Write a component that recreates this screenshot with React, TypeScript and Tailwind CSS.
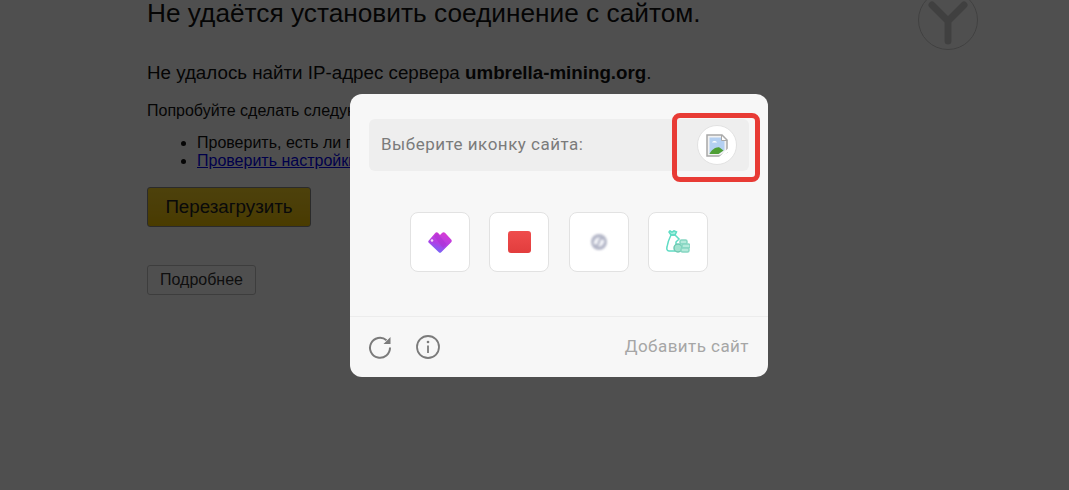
import React from 'react';

function BrokenImage() {
  return (
    <svg width="22" height="23" viewBox="0 0 22 23" className="blur-[0.25px]">
      <path d="M1 1h15l5 5v12l-7 4H1z" fill="#f2f2f2" stroke="#a8a8a8" strokeWidth="1.500" />
      <path d="M3.500 3.500H15l3.500 3.500v9l-6 4H3.500z" fill="#b4d0f2" />
      <path d="M15.500 1v5.500H21z" fill="#fff" stroke="#a8a8a8" />
      <path d="M6 8.500c1-2 4-2 5 0z" fill="#fff" />
      <path d="M3.500 20c2-4.500 7-7.500 10-6.500l4 3-5 3.500z" fill="#4f9f35" />
      <path d="M13 23l9-8.500v3.500l-6 5z" fill="#fff" />
    </svg>
  );
}

function HeartIcon() {
  return (
    <svg width="24" height="22" viewBox="0 0 24 22" className="blur-[0.5px]">
      <defs>
        <linearGradient id="hg" x1="0.7" y1="0" x2="0.3" y2="1">
          <stop offset="0" stopColor="#d93cd4" />
          <stop offset="0.55" stopColor="#b13ee4" />
          <stop offset="1" stopColor="#6f6cfa" />
        </linearGradient>
      </defs>
      <path d="M.8 9.500L7 2.200c1-1.200 2.200-1.200 3.200-.2L12 4l2-2c1-1 2.200-1 3.200 0l6 6.500c.8 1 .8 1.800 0 2.700l-10 10c-.8.8-1.600.8-2.400 0L.8 11.700c-.7-.7-.7-1.500 0-2.200z" fill="url(#hg)" />
      <path d="M9 2l9.500 11-3.500 4L6 5z" fill="#a92fd0" opacity="0.45" />
      <circle cx="4" cy="9.500" r="1.300" fill="#f5d8f8" />
    </svg>
  );
}

function GlobeIcon() {
  return (
    <svg width="18" height="18" viewBox="0 0 18 18" className="blur-[0.8px]">
      <circle cx="9" cy="9" r="8" fill="#b4b7c8" />
      <path d="M3.500 10.500c1-5 4-7 6.500-5.500-1.500 1.500-2.500 4-2.500 6-1.500.5-3 .5-4-.5zM14.500 7.500c-1 5-4 7-6.500 5.500 1.500-1.500 2.500-4 2.500-6 1.500-.5 3-.5 4 .5z" fill="#f4f5f9" />
    </svg>
  );
}

function MoneyBagIcon() {
  return (
    <svg width="24" height="24" viewBox="0 0 24 24" fill="none" stroke="#5fdcc4" strokeWidth="1.500" className="blur-[0.5px]">
      <path d="M4 .8l2 1.400 2-1.400 2.500 1L9 5H5L3 2z" fill="#a5f0df" />
      <path d="M5 5h4l4 4-3 3v7l-1 2H3c-2 0-2.500-2-2-4 .5-4 2-8 4-12z" />
      <circle cx="12" cy="18" r="4" fill="#a2e2cf" stroke="#6ec9b2" />
      <rect x="14" y="10" width="7" height="4" rx="1.500" fill="#b5eadb" stroke="#86d6c2" />
      <rect x="16" y="14" width="8" height="4" rx="1.500" fill="#b5eadb" stroke="#86d6c2" />
      <rect x="15" y="18" width="8" height="4" rx="1.500" fill="#b5eadb" stroke="#86d6c2" />
    </svg>
  );
}

function ReloadIcon() {
  return (
    <svg width="24" height="24" viewBox="0 0 24 24" fill="none">
      <path d="M18.500 5.200A10 10 0 1 0 22 12.500" stroke="#7b7b7b" strokeWidth="2" />
      <path d="M22.500 2v7h-7z" fill="#7b7b7b" />
    </svg>
  );
}

function InfoIcon() {
  return (
    <svg width="24" height="24" viewBox="0 0 24 24" fill="none">
      <circle cx="12" cy="12" r="11" stroke="#7b7b7b" strokeWidth="1.800" />
      <circle cx="12" cy="7" r="1.300" fill="#7b7b7b" />
      <path d="M12 10.500V18" stroke="#7b7b7b" strokeWidth="1.800" />
    </svg>
  );
}

function YandexLogo() {
  return (
    <svg width="62" height="62" viewBox="0 0 62 62" fill="none">
      <circle cx="31" cy="31" r="29.500" stroke="#cfcfcf" strokeWidth="1" />
      <path d="M15 16l16 16 16-16M31 32v20" stroke="#cfcfcf" strokeWidth="7" strokeLinecap="round" strokeLinejoin="round" />
    </svg>
  );
}

const icons = [<HeartIcon />, <div className="h-[22px] w-[23px] rounded-[3px] bg-gradient-to-b from-[#ef4c4c] to-[#e23d3d]" />, <GlobeIcon />, <MoneyBagIcon />];

export default function App() {
  return (
    <div className="relative h-[490px] w-[1069px] overflow-hidden bg-white font-['Liberation_Sans',Arial,sans-serif] text-[#111]">
      {/* error page behind the overlay */}
      <div className="relative -mt-[3px] pl-[147px]">
        <h1 className="text-[26.250px] leading-[32px]">Не удаётся установить соединение с сайтом.</h1>
        <p className="mt-[33px] text-[18.750px] leading-[21px]">
          Не удалось найти IP-адрес сервера <b>umbrella-mining.org</b>.
        </p>
        <p className="mt-[19px] text-[16px] leading-[18px]">Попробуйте сделать следующее:</p>
        <ul className="mt-[14px] list-disc pl-[50px] text-[16px] leading-[18px]">
          <li>Проверить, есть ли подключение к интернету.</li>
          <li>
            <a href="#" className="text-[#0000ee] underline">Проверить настройки прокси-сервера и брандмауэра</a>
          </li>
        </ul>
        <button className="mt-[17px] block h-[40px] w-[164px] rounded-[3px] border border-[#8a8a8a] bg-gradient-to-b from-[#f8d225] to-[#ecbf00] text-[18.750px] text-[#222]">
          Перезагрузить
        </button>
        <button className="mt-[38px] block h-[30px] w-[109px] rounded-[3px] border border-[#c4c4c4] bg-white text-[16px] text-[#333]">
          Подробнее
        </button>
        <div className="absolute left-[917px] top-[-8px]">
          <YandexLogo />
        </div>
      </div>

      {/* dimming */}
      <div className="absolute inset-0 bg-black/[0.69]" />

      {/* add-site popup */}
      <div className="absolute left-[350px] top-[94px] flex h-[283px] w-[418px] flex-col rounded-[12px] bg-[#f7f7f7] font-['Roboto',sans-serif]">
        <div className="mx-[19px] mt-[25px] flex h-[52px] items-center justify-between rounded-[6px] bg-[#eeeeee] pl-[12px] pr-[12px]">
          <span className="text-[17px] tracking-[0.5px] text-[#7b7b7b]">Выберите иконку сайта:</span>
          <div className="flex h-[40px] w-[40px] items-center justify-center rounded-full border border-[#e2e2e2] bg-white">
            <BrokenImage />
          </div>
        </div>
        <div className="mt-[41px] flex justify-center gap-[19.500px]">
          {icons.map((icon, i) => (
            <div key={i} className="flex h-[60px] w-[60px] items-center justify-center rounded-[8px] border border-[#e2e2e2] bg-white">
              {icon}
            </div>
          ))}
        </div>
        <div className="mt-[44px] flex flex-1 items-center justify-between border-t border-[#ececec] pl-[18px] pr-[19px]">
          <div className="flex items-center gap-[24px]">
            <ReloadIcon />
            <InfoIcon />
          </div>
          <span className="text-[17px] tracking-[0.45px] text-[#a6a6a6]">Добавить сайт</span>
        </div>
      </div>

      {/* red highlight */}
      <div className="absolute left-[672px] top-[113px] h-[69px] w-[88px] rounded-[8px] border-[5px] border-[#e83b35]" />
    </div>
  );
}
